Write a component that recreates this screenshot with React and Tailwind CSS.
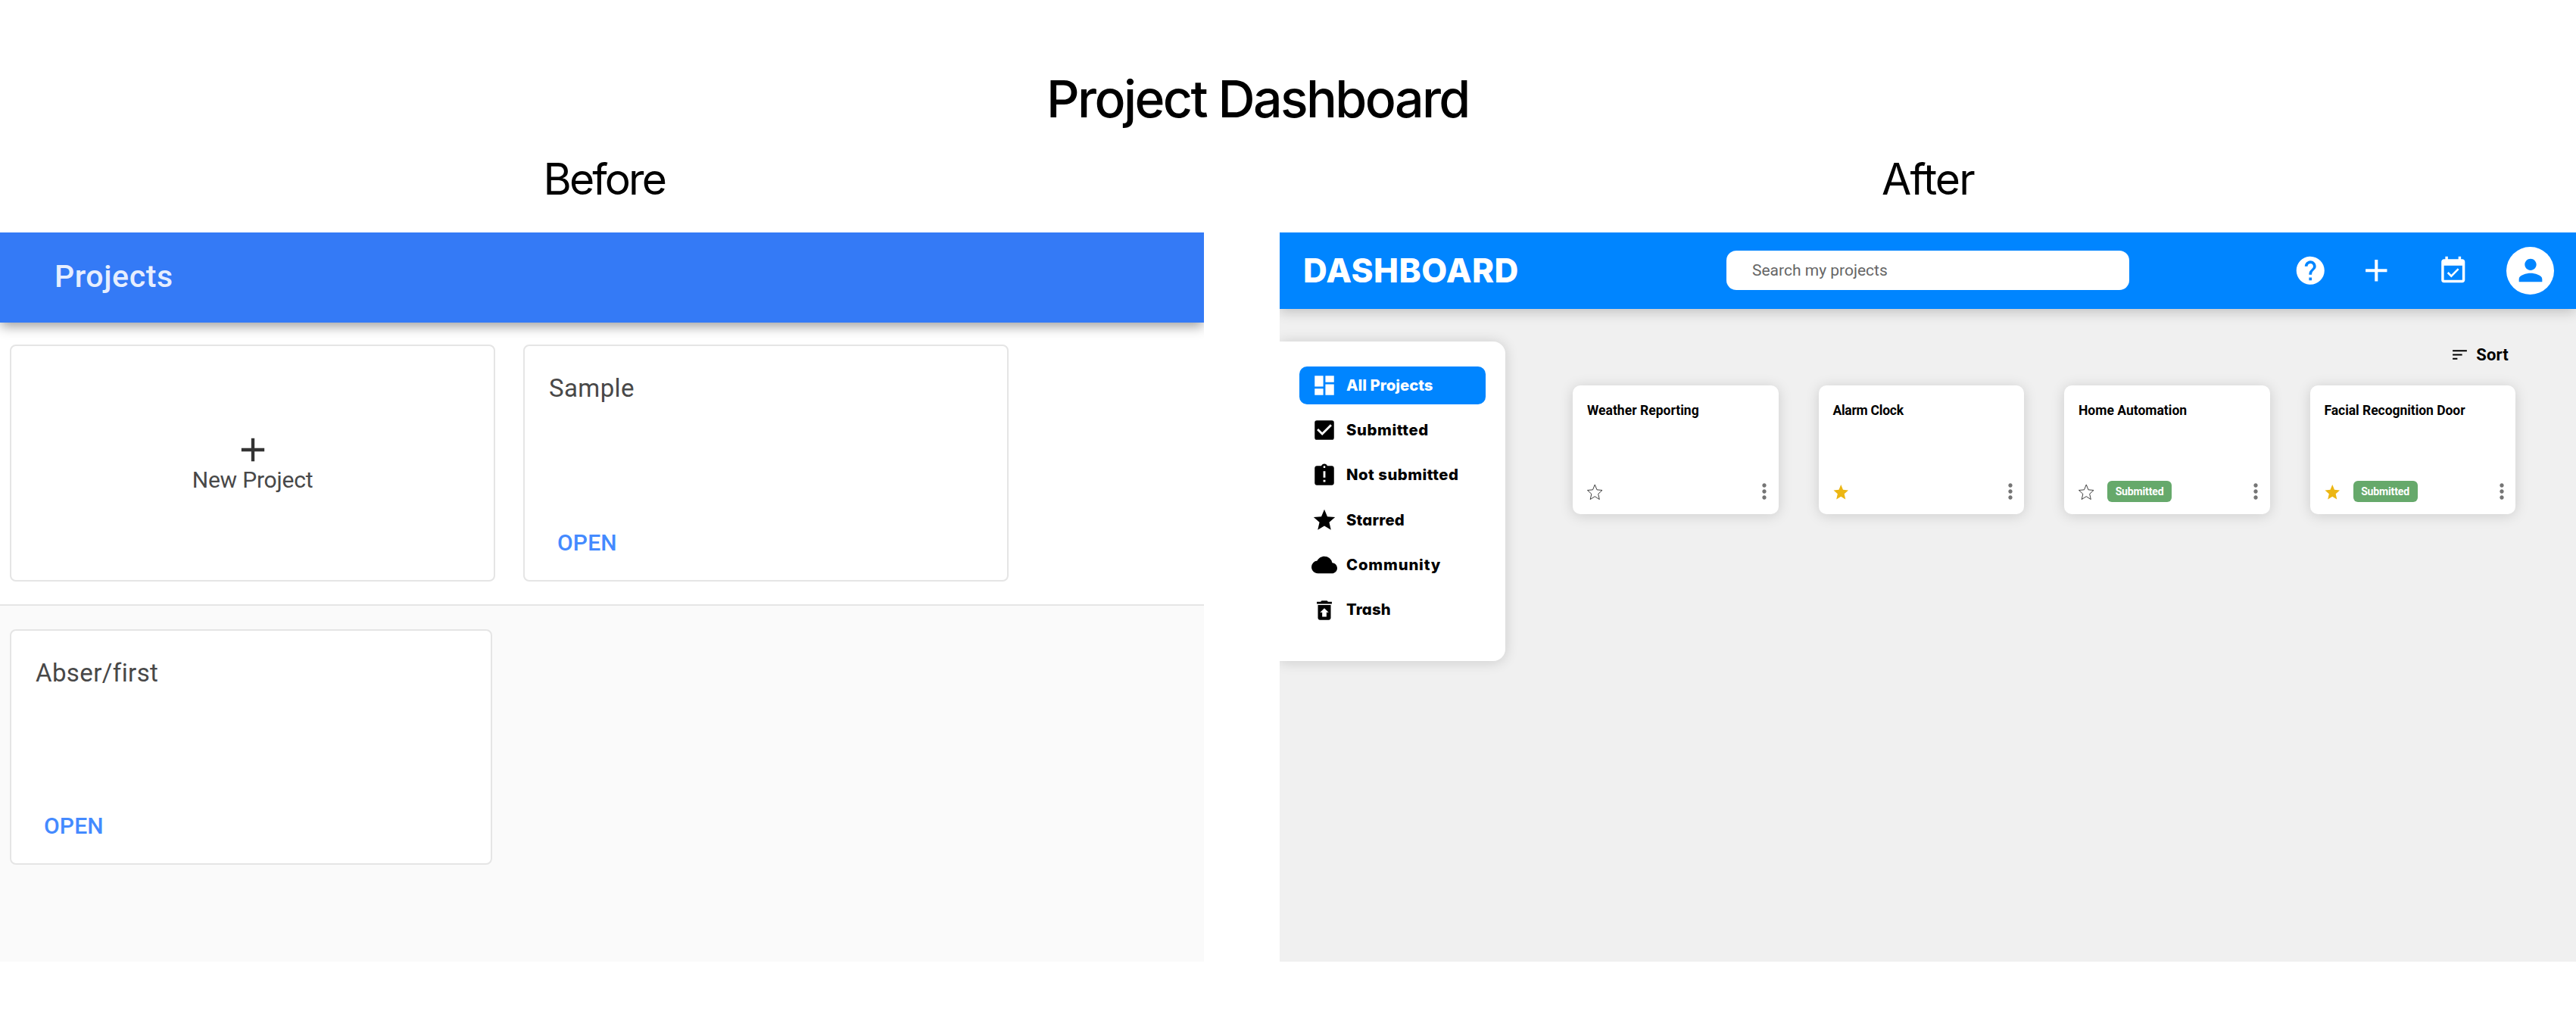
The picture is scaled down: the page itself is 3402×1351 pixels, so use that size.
import React from "react";
import {
  MdAdd,
  MdAssignmentLate,
  MdCheckBox,
  MdCloud,
  MdDashboard,
  MdEventAvailable,
  MdHelp,
  MdMoreVert,
  MdPerson,
  MdRestoreFromTrash,
  MdSort,
  MdStar,
} from "react-icons/md";

const NAV_ITEMS = [
  { label: "All Projects", Icon: MdDashboard, tracking: "tracking-[0px]", active: true },
  { label: "Submitted", Icon: MdCheckBox, tracking: "tracking-[0.6px]" },
  { label: "Not submitted", Icon: MdAssignmentLate, tracking: "tracking-[0.5px]" },
  { label: "Starred", Icon: MdStar, tracking: "tracking-[0.2px]" },
  { label: "Community", Icon: MdCloud, tracking: "tracking-[0.85px]" },
  { label: "Trash", Icon: MdRestoreFromTrash, tracking: "tracking-[0.15px]" },
];

const PROJECTS = [
  { name: "Weather Reporting", tracking: "tracking-[0.02px]" },
  { name: "Alarm Clock", tracking: "tracking-[-0.26px]", starred: true },
  { name: "Home Automation", tracking: "tracking-[0.01px]", submitted: true },
  { name: "Facial Recognition Door", tracking: "tracking-[-0.04px]", starred: true, submitted: true },
];

const STAR_PATH =
  "M12 17.27 18.18 21l-1.64-7.03L22 9.24l-7.19-.61L12 2 9.19 8.63 2 9.24l5.46 4.73L5.82 21z";

function StarToggle({ filled }) {
  return (
    <svg viewBox="1.5 1 21 20.5" preserveAspectRatio="none" className="h-[21px] w-[20.5px] shrink-0">
      <path
        d={STAR_PATH}
        fill={filled ? "#ecb613" : "none"}
        stroke={filled ? "none" : "#2b2b2b"}
        strokeWidth="0.9"
      />
    </svg>
  );
}

function OldCard({ name, className }) {
  return (
    <div
      className={`flex shrink-0 flex-col justify-between rounded-[8px] border-2 border-[#e5e5e5] bg-white pb-[29px] pl-[32px] pt-[36px] ${className}`}
    >
      <span className="text-[33px] font-[450] leading-[40px] tracking-[0.4px] text-[#484848]">{name}</span>
      <span className="pl-[11px] text-[30px] font-[550] leading-[40px] tracking-[0.2px] text-[#448aff]">
        OPEN
      </span>
    </div>
  );
}

function BeforePanel() {
  return (
    <section className="flex h-[963px] w-[1590px] flex-col overflow-hidden bg-[#fafafa] font-['Roboto',sans-serif]">
      <header className="relative flex h-[119px] shrink-0 items-center bg-[#347af6] pb-[3px] pl-[72px] shadow-[0_6px_15px_-1px_rgba(0,0,0,0.38)]">
        <h3 className="text-[41px] font-medium leading-[48px] tracking-[0.6px] text-[#e6eefe]">Projects</h3>
      </header>
      <div className="flex h-[372px] shrink-0 gap-[37px] bg-white pl-[13px] pt-[29px]">
        <div className="flex h-[313px] w-[641px] flex-col items-center rounded-[8px] border-2 border-[#e5e5e5] bg-white pt-[111px] text-[#484848]">
          <MdAdd className="size-[52px] text-[#333]" />
          <span className="text-[30px] font-[450] leading-[28px] tracking-[-0.2px]">New Project</span>
        </div>
        <OldCard name="Sample" className="h-[313px] w-[641px]" />
      </div>
      <div className="grow border-t-2 border-[#e5e5e5] pl-[13px] pt-[31px]">
        <OldCard name="Abser/first" className="h-[311px] w-[637px]" />
      </div>
    </section>
  );
}

function ProjectCard({ name, tracking, starred, submitted }) {
  return (
    <article className="flex h-[170px] w-[271.5px] flex-col justify-between rounded-[10px] bg-white pb-[14px] pl-[19px] pr-[2.5px] pt-[23px] shadow-[0_2px_18px_rgba(0,0,0,0.15)]">
      <h4 className={`whitespace-nowrap text-[17.5px] font-bold leading-[20px] text-black ${tracking}`}>{name}</h4>
      <div className="flex h-[32px] items-center">
        <StarToggle filled={starred} />
        {submitted && (
          <span className="ml-[17.5px] flex h-[28px] w-[85px] items-center justify-center rounded-[6px] bg-[#66a96b] text-[14px] font-bold tracking-[-0.15px] text-white">
            Submitted
          </span>
        )}
        <MdMoreVert className="ml-auto size-[32px] text-[#757575]" />
      </div>
    </article>
  );
}

function AfterPanel() {
  return (
    <section className="flex h-[963px] w-[1712px] flex-col overflow-hidden bg-[#f0f0f0] font-['Roboto',sans-serif]">
      <header className="relative flex h-[100.5px] shrink-0 items-center bg-[#0085ff] pl-[31px] text-white shadow-[0_4px_16px_rgba(0,0,0,0.2)]">
        <h3 className="w-[559px] font-['Inter',sans-serif] text-[44px] font-extrabold leading-[50px] tracking-[0.45px]">
          DASHBOARD
        </h3>
        <div className="flex h-[52px] w-[532px] items-center rounded-[13px] bg-white pl-[34px] pt-px text-[21px] text-[#666]">
          Search my projects
        </div>
        <div className="ml-auto flex items-center pr-[29px]">
          <MdHelp className="size-[44.5px]" />
          <MdAdd className="ml-[41px] size-[48.6px]" />
          <MdEventAvailable className="ml-[55.5px] size-[41.5px]" />
          <div className="ml-[50px] flex size-[63px] items-center justify-center rounded-full bg-white">
            <MdPerson className="size-[46px] text-[#0085ff]" />
          </div>
        </div>
      </header>

      <div className="flex items-start justify-between pr-[80px]">
        <nav className="mt-[43.5px] flex h-[422px] w-[298px] flex-col gap-[9.9px] rounded-r-[16px] bg-white pl-[26px] pt-[33px] font-['Inter',sans-serif] shadow-[0_1px_18px_rgba(0,0,0,0.16)]">
          {NAV_ITEMS.map(({ label, Icon, tracking, active }) => (
            <a
              key={label}
              className={`flex h-[49.5px] w-[246px] items-center gap-[12px] rounded-[10px] pl-[16px] text-[20.3px] font-extrabold ${
                active ? "bg-[#0085ff] text-white" : "text-black"
              } ${tracking}`}
            >
              <Icon className="size-[34px] shrink-0" />
              <span className="whitespace-nowrap [font-feature-settings:'cv11']">{label}</span>
            </a>
          ))}
        </nav>

        <div className="mt-[45.5px] w-[1245px]">
          <div className="flex h-[30px] items-center justify-end gap-[9px] pr-[9px] text-[22px] font-bold text-black">
            <MdSort className="size-[25px]" />
            <span className="tracking-[0.2px]">Sort</span>
          </div>
          <div className="mt-[26px] flex justify-between">
            {PROJECTS.map((project) => (
              <ProjectCard key={project.name} {...project} />
            ))}
          </div>
        </div>
      </div>
    </section>
  );
}

export default function App() {
  return (
    <main className="flex h-[1351px] w-[3402px] flex-col overflow-hidden bg-white">
      <div className="font-['Inter',sans-serif] text-black">
        <h1 className="pl-[1382px] pt-[90px] text-[68px] font-medium leading-[80px] tracking-[-2.6px]">
          Project Dashboard
        </h1>
        <div className="flex pt-[32px] text-[57px] leading-[70px]">
          <h2 className="w-[1767px] pl-[717.5px] tracking-[-2.9px]">Before</h2>
          <h2 className="pl-[718px] tracking-[-1.9px]">After</h2>
        </div>
      </div>
      <div className="flex justify-between pt-[35px]">
        <BeforePanel />
        <AfterPanel />
      </div>
    </main>
  );
}
